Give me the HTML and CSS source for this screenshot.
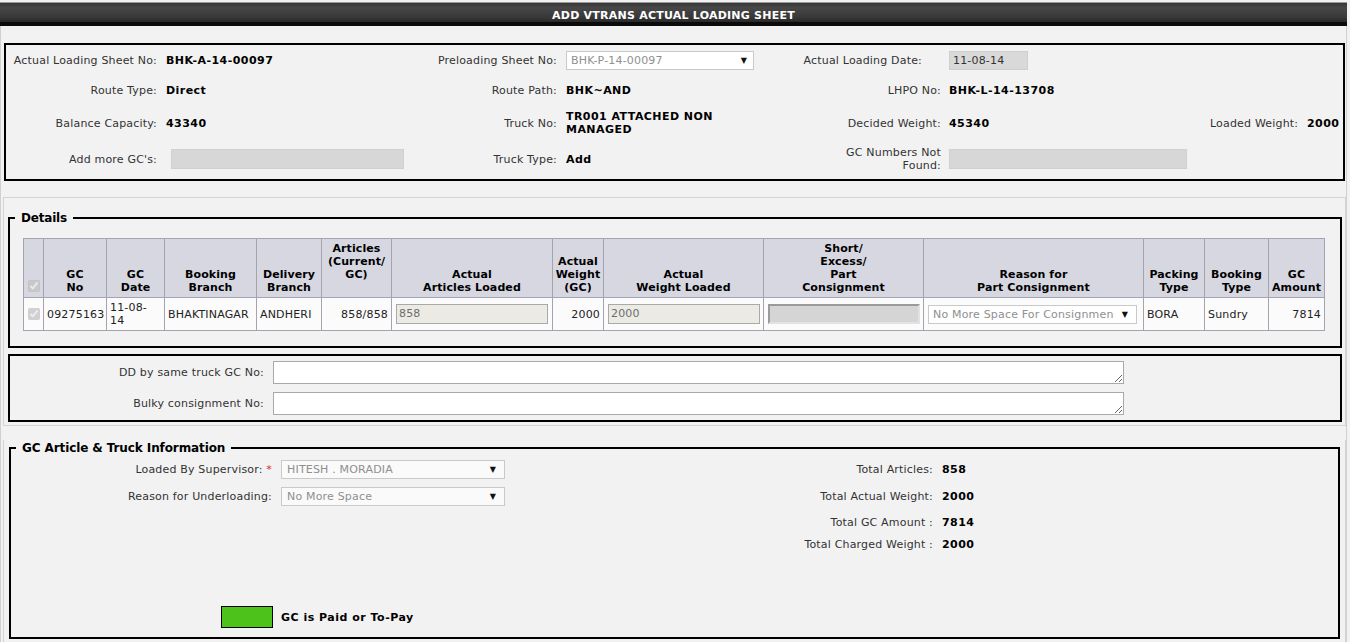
FILE: index.html
```html
<!DOCTYPE html>
<html>
<head>
<meta charset="utf-8">
<title>Add VTrans Actual Loading Sheet</title>
<link rel="stylesheet" href="styles.css">
</head>
<body>
<div class="page">
  <div class="titlebar">ADD VTRANS ACTUAL LOADING SHEET</div>
  <div class="content">
    <div class="hdr-box">
      <div class="hdr-grid">
        <div class="lbl">Actual Loading Sheet No:</div>
        <div class="val">BHK-A-14-00097</div>
        <div class="lbl">Preloading Sheet No:</div>
        <div><div class="select sel-pre"><span class="sv">BHK-P-14-00097</span><span class="arrow">▼</span></div></div>
        <div class="lbl lbl3 lbl-date">Actual Loading Date:</div>
        <div><div class="date-box">11-08-14</div></div>
        <div></div>
        <div></div>

        <div class="lbl">Route Type:</div>
        <div class="val">Direct</div>
        <div class="lbl">Route Path:</div>
        <div class="val">BHK~AND</div>
        <div class="lbl lbl3">LHPO No:</div>
        <div class="val">BHK-L-14-13708</div>
        <div></div>
        <div></div>

        <div class="lbl">Balance Capacity:</div>
        <div class="val">43340</div>
        <div class="lbl">Truck No:</div>
        <div class="val">TR001 ATTACHED NON MANAGED</div>
        <div class="lbl lbl3">Decided Weight:</div>
        <div class="val">45340</div>
        <div class="lbl lbl4">Loaded Weight:</div>
        <div class="val">2000</div>

        <div class="lbl">Add more GC's:</div>
        <div><div class="gray-input gi-add"></div></div>
        <div class="lbl">Truck Type:</div>
        <div class="val">Add</div>
        <div class="lbl lbl3">GC Numbers Not<br>Found:</div>
        <div><div class="gray-input gi-nf"></div></div>
        <div></div>
        <div></div>
      </div>
    </div>

    <div class="panel">
      <fieldset class="fs fs-details">
        <legend>Details</legend>
        <table class="grid">
          <colgroup>
            <col style="width:20px"><col style="width:63px"><col style="width:58px"><col style="width:92px">
            <col style="width:65px"><col style="width:70px"><col style="width:161px"><col style="width:51px">
            <col style="width:160px"><col style="width:160px"><col style="width:220px"><col style="width:61px">
            <col style="width:64px"><col style="width:56px">
          </colgroup>
          <thead>
            <tr>
              <th class="chk"><input type="checkbox" checked disabled></th>
              <th>GC<br>No</th>
              <th>GC<br>Date</th>
              <th>Booking<br>Branch</th>
              <th>Delivery<br>Branch</th>
              <th class="top">Articles<br>(Current/<br>GC)</th>
              <th>Actual<br>Articles Loaded</th>
              <th>Actual<br>Weight<br>(GC)</th>
              <th>Actual<br>Weight Loaded</th>
              <th>Short/<br>Excess/<br>Part<br>Consignment</th>
              <th>Reason for<br>Part Consignment</th>
              <th>Packing<br>Type</th>
              <th>Booking<br>Type</th>
              <th>GC<br>Amount</th>
            </tr>
          </thead>
          <tbody>
            <tr>
              <td class="chk"><input type="checkbox" checked disabled></td>
              <td class="nw">09275163</td>
              <td>11-08-<br>14</td>
              <td class="nw">BHAKTINAGAR</td>
              <td class="nw">ANDHERI</td>
              <td class="num">858/858</td>
              <td><div class="dis-input">858</div></td>
              <td class="num">2000</td>
              <td><div class="dis-input">2000</div></td>
              <td><div class="inset-input"></div></td>
              <td><div class="select sel-reason"><span class="sv">No More Space For Consignmen</span><span class="arrow">▼</span></div></td>
              <td>BORA</td>
              <td>Sundry</td>
              <td class="num">7814</td>
            </tr>
          </tbody>
        </table>
      </fieldset>

      <div class="extra-box">
        <div class="extra-grid">
          <label class="lbl">DD by same truck GC No:</label>
          <textarea class="ta"></textarea>
          <label class="lbl">Bulky consignment No:</label>
          <textarea class="ta"></textarea>
        </div>
      </div>
    </div>

    <div class="panel panel-open">
      <fieldset class="fs fs-info">
        <legend>GC Article &amp; Truck Information</legend>
        <div class="info-grid">
          <div class="lbl">Loaded By Supervisor: <span class="req">*</span></div>
          <div><div class="select sel-sup"><span class="sv">HITESH . MORADIA</span><span class="arrow">▼</span></div></div>
          <div class="lbl">Total Articles:</div>
          <div class="val">858</div>

          <div class="lbl">Reason for Underloading:</div>
          <div><div class="select sel-sup"><span class="sv">No More Space</span><span class="arrow">▼</span></div></div>
          <div class="lbl">Total Actual Weight:</div>
          <div class="val">2000</div>

          <div></div>
          <div></div>
          <div class="lbl">Total GC Amount :</div>
          <div class="val">7814</div>

          <div></div>
          <div></div>
          <div class="lbl">Total Charged Weight :</div>
          <div class="val">2000</div>
        </div>
        <div class="legend-row">
          <span class="swatch"></span>
          <span class="paid">GC is Paid or To-Pay</span>
        </div>
      </fieldset>
    </div>
  </div>
</div>
</body>
</html>
```

FILE: styles.css
```css
html, body {
  margin: 0;
  padding: 0;
}
body {
  background: #f2f2f2;
  font-family: "DejaVu Sans", Verdana, sans-serif;
  font-size: 11px;
  line-height: 13px;
  letter-spacing: 0.18px;
  color: #333;
}
.page {
  width: 1347px;
}
.titlebar {
  margin-top: 2px;
  border-top: 1px solid #9c9c9c;
  height: 13px;
  padding-top: 6px;
  line-height: 13px;
  background: linear-gradient(#363636, #474747 25%, #3a3a3a 70%, #2a2a2a);
  border-bottom: 4px solid #0b0b0b;
  color: #fff;
  font-weight: bold;
  text-align: center;
  font-size: 11px;
  letter-spacing: 0.23px;
}
.content {
  border-left: 1px solid #d0d0d0;
  border-right: 1px solid #d0d0d0;
  height: 616px;
  overflow: hidden;
}
.lbl {
  text-align: right;
  padding-right: 9px;
  color: #333;
}
.val {
  font-weight: bold;
  color: #000;
  letter-spacing: 0.45px;
}

/* header info box */
.hdr-box {
  margin: 17px 1px 0 3px;
  border: 2px solid #000;
}
.hdr-grid {
  display: grid;
  grid-template-columns: 160px 248px 152px 199px 184px 261px 97px 1fr;
  grid-template-rows: 31px 28px 38px 34px;
  align-items: center;
  padding-bottom: 3px;
}
.hdr-grid .lbl3 { padding-right: 8px; }
.hdr-grid .lbl-date { padding-right: 27px; }
.hdr-grid .lbl4 { padding-right: 10px; white-space: nowrap; }

.select {
  display: flex;
  align-items: center;
  justify-content: space-between;
  box-sizing: border-box;
  height: 19px;
  border: 1px solid #c9c9c9;
  background: #fff;
  color: #8f8f8f;
  padding: 0 6px 0 4px;
  overflow: hidden;
}
.select .sv {
  white-space: nowrap;
  flex: 1;
}
.select .arrow {
  font-size: 8px;
  color: #111;
  padding-left: 4px;
  letter-spacing: 0;
}
.sel-pre { width: 188px; }
.date-box {
  box-sizing: border-box;
  width: 79px;
  height: 19px;
  line-height: 17px;
  background: #d9d9d9;
  border: 1px solid #cfcfcf;
  padding-left: 3px;
  color: #333;
}
.gray-input {
  box-sizing: border-box;
  height: 20px;
  background: #d7d7d7;
  border: 1px solid #d0d0d0;
}
.gi-add { width: 233px; margin-left: 5px; }
.gi-nf { width: 238px; }

/* panels */
.panel {
  margin: 16px 0 0 2px;
  border: 1px solid #d4d4d4;
}
.panel-open {
  margin-top: 0;
  border-top: 0;
  border-bottom: 0;
  height: 300px;
}
.fs {
  border: 2px solid #000;
  min-width: 0;
}
.fs legend {
  font-size: 12px;
  font-weight: bold;
  line-height: 16px;
  color: #000;
  padding: 0 6px;
  letter-spacing: 0;
}
.fs-details {
  margin: 12px 3px 0 4px;
  padding: 12px 15px 15px 13px;
}
.fs-details legend {
  margin-left: -8px;
  letter-spacing: -0.2px;
}

/* details grid */
.grid {
  border-collapse: collapse;
  table-layout: fixed;
  width: 1301px;
}
.grid th, .grid td {
  border: 1px solid #a4a4b0;
  padding: 4px 3px;
  line-height: 13px;
  overflow: hidden;
}
.grid th {
  background: #d7d7e1;
  color: #000;
  font-weight: bold;
  text-align: center;
  vertical-align: bottom;
  padding: 3px 2px 3px;
  letter-spacing: 0.1px;
}
.grid th.top {
  vertical-align: top;
}
.grid td {
  background: #fbfbfb;
  vertical-align: middle;
  color: #222;
  text-align: left;
  padding: 3px 3px;
  height: 23px;
}
.grid .chk {
  padding: 0;
  text-align: center;
}
.grid th.chk { padding-bottom: 2px; }
.grid .chk input {
  margin: 2px 0 2px 1px;
  width: 12px;
  height: 12px;
}
.grid td.num { text-align: right; }
.grid td.nw { white-space: nowrap; }

.dis-input {
  box-sizing: border-box;
  width: 152px;
  height: 20px;
  line-height: 18px;
  margin-left: 1px;
  background: #ebebe4;
  border: 1px solid #a9a9a9;
  color: #6d6d6d;
  padding-left: 2px;
}
.inset-input {
  box-sizing: border-box;
  width: 152px;
  height: 20px;
  margin-left: 1px;
  background: #d5d5d5;
  border: 2px solid;
  border-color: #9a9a9a #e2e2e2 #e2e2e2 #9a9a9a;
}
.sel-reason {
  width: 209px;
  margin-left: 1px;
  padding-right: 8px;
}
.sel-reason .arrow {
  padding-left: 6px;
}

/* extra box */
.extra-box {
  margin: 6px 3px 3px 4px;
  border: 2px solid #000;
  padding: 5px 0 5px 0;
}
.extra-grid {
  display: grid;
  grid-template-columns: 263px 851px;
  row-gap: 8px;
  align-items: center;
}
.ta {
  box-sizing: border-box;
  width: 851px;
  height: 23px;
  margin: 0;
  display: block;
  border: 1px solid #a9a9a9;
  background: #fff;
  font-family: "DejaVu Sans", Verdana, sans-serif;
  font-size: 11px;
}

/* info fieldset */
.fs-info {
  margin: 14px 5px 0 5px;
  padding: 0 0 9px 0;
}
.fs-info legend {
  margin-left: 5px;
  letter-spacing: -0.1px;
}
.info-grid {
  display: grid;
  grid-template-columns: 270px 309px 352px 1fr;
  grid-template-rows: 26px 28px 24px 20px;
  align-items: center;
}
.req {
  color: #e0262b;
}
.sel-sup {
  width: 224px;
  background: #fafafa;
  padding-left: 5px;
  padding-right: 8px;
}
.legend-row {
  display: flex;
  align-items: center;
  gap: 8px;
  margin-top: 52px;
  padding-left: 210px;
}
.swatch {
  width: 50px;
  height: 20px;
  border: 1px solid #000;
  background: #4cc21b;
}
.paid {
  font-weight: bold;
  color: #000;
  font-size: 11px;
  letter-spacing: 0.5px;
}
```
